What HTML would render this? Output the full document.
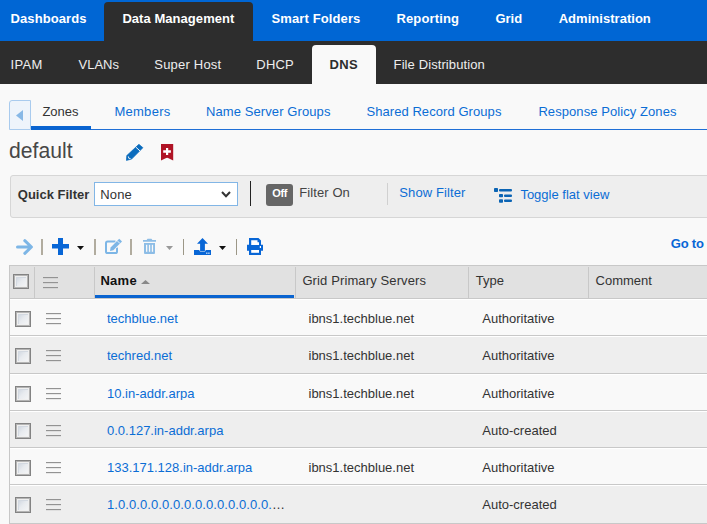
<!DOCTYPE html>
<html><head><meta charset="utf-8">
<style>
html,body{margin:0;padding:0}
body{width:707px;height:524px;overflow:hidden;position:relative;background:#f9f9f9;font-family:"Liberation Sans",sans-serif;font-size:13px;color:#333}
.a{position:absolute}
.t{position:absolute;line-height:1;white-space:nowrap}
.b{font-weight:bold}
.nav{color:#fff;font-weight:bold;top:12px}
.sub{color:#eee;top:58px}
.stab{color:#0b6dd5;top:105px}
.lnk{color:#0b6dd5}
.sep{position:absolute;width:2px;background:#b1ac9f;top:239px;height:16px}
.sep1{width:1px;background:#9c9787}
.cb{position:absolute;width:16px;height:16px;box-sizing:border-box;border:1px solid #838383;box-shadow:inset 0 0 0 1px #b4b4b4,inset 0 0 0 2px #efefef,inset 1px 1px 0 2px #d3d9e1;background:linear-gradient(135deg,#c3ccd8 0%,#e8ebef 50%,#f8f8f8 100%)}
.hb{position:absolute;width:15px;height:11px}
.hb i{position:absolute;left:0;width:15px;height:1px;background:#939393;box-shadow:0 0.5px 0 rgba(150,150,150,.35)}
.row{position:absolute;left:9px;width:698px;border-bottom:1px solid #c6c6c6;box-sizing:border-box}
</style></head><body>
<!-- top nav -->
<div class="a" style="left:0;top:0;width:707px;height:41px;background:#0066d4"></div>
<div class="a" style="left:104px;top:2px;width:149px;height:39px;background:#2d2d2d;border-radius:4px 4px 0 0"></div>
<div class="t nav" style="left:10.5px;letter-spacing:0.1px">Dashboards</div>
<div class="t nav" style="left:122.4px;letter-spacing:0.05px">Data Management</div>
<div class="t nav" style="left:271.5px;letter-spacing:0.12px">Smart Folders</div>
<div class="t nav" style="left:396.4px;letter-spacing:0.15px">Reporting</div>
<div class="t nav" style="left:495.4px">Grid</div>
<div class="t nav" style="left:558.7px;letter-spacing:0.03px">Administration</div>
<!-- sub nav -->
<div class="a" style="left:0;top:41px;width:707px;height:43px;background:#2d2d2d"></div>
<div class="a" style="left:312px;top:45px;width:64px;height:39px;background:#f9f9f9;border-radius:4px 4px 0 0"></div>
<div class="t sub" style="left:10.4px;letter-spacing:0.4px">IPAM</div>
<div class="t sub" style="left:78.5px">VLANs</div>
<div class="t sub" style="left:154.3px;letter-spacing:0.2px">Super Host</div>
<div class="t sub" style="left:256.3px;letter-spacing:0.2px">DHCP</div>
<div class="t sub b" style="left:329.5px;color:#2d2d2d;letter-spacing:0.3px">DNS</div>
<div class="t sub" style="left:393.6px;letter-spacing:0.1px">File Distribution</div>
<!-- subtabs -->
<div class="a" style="left:9px;top:100px;width:20px;height:28px;border:1px solid #a9cbee;background:#eef4fb;border-radius:3px 0 0 0"></div>
<svg class="a" style="left:16px;top:110px" width="7" height="11"><path d="M7 0 L0 5.5 L7 11 Z" fill="#87b8e6"/></svg>
<div class="a" style="left:31px;top:129px;width:676px;height:1px;background:#1f6fd6"></div>
<div class="a" style="left:31px;top:126px;width:60px;height:4px;background:#0a64d0"></div>
<div class="t stab" style="left:42.4px;color:#333">Zones</div>
<div class="t stab" style="left:114.4px;letter-spacing:0.28px">Members</div>
<div class="t stab" style="left:205.9px;letter-spacing:0.1px">Name Server Groups</div>
<div class="t stab" style="left:366.4px;letter-spacing:0.07px">Shared Record Groups</div>
<div class="t stab" style="left:538.4px;letter-spacing:0.075px">Response Policy Zones</div>
<!-- title -->
<div class="t" style="left:8.6px;top:140px;font-size:22px;color:#474747;transform:scaleX(0.962);transform-origin:0 0">default</div>
<svg class="a" style="left:126px;top:144px" width="18" height="17" viewBox="0 0 18 17">
  <path d="M12.9 0.3 L16.9 3.7 L5.6 15.1 L0.4 16.4 L0.8 11.6 Z" fill="#0b6cbd" stroke="#0b6cbd" stroke-width="0.7" stroke-linejoin="round"/>
  <path d="M9.8 3.1 L14.1 7.0" stroke="#f9f9f9" stroke-width="1"/>
  <path d="M2.3 12.4 L2.8 14.3 L4.6 14.6" stroke="#f9f9f9" stroke-width="0.9" fill="none"/>
</svg>
<svg class="a" style="left:161px;top:144px" width="13" height="17" viewBox="0 0 13 17">
  <path d="M0 0 H12.2 V16.6 L7 13.9 Q6.1 13.4 5.2 13.9 L0 16.6 Z" fill="#b01426"/>
  <path d="M5 4 H7.2 V6.3 H9.9 V8.7 H7.2 V10.9 H5 V8.7 H2.2 V6.3 H5 Z" fill="#fff"/>
</svg>
<!-- filter bar -->
<div class="a" style="left:10px;top:175px;width:710px;height:43px;box-sizing:border-box;background:#eeeeee;border:1px solid #d6d6d6;border-radius:3px"></div>
<div class="t b" style="left:17.8px;top:188px">Quick Filter</div>
<div class="a" style="left:94px;top:182px;width:144px;height:24px;box-sizing:border-box;background:#fff;border:1px solid #82b6e6"></div>
<div class="t" style="left:100.3px;top:188px;letter-spacing:0.15px">None</div>
<svg class="a" style="left:221px;top:191px" width="10" height="7" viewBox="0 0 10 7"><path d="M1 1 L5 5.3 L9 1" stroke="#333" stroke-width="2" fill="none"/></svg>
<div class="a" style="left:249.5px;top:181px;width:1.5px;height:25px;background:#222"></div>
<div class="a" style="left:266px;top:184px;width:27px;height:22px;background:#666;border-radius:3px"></div>
<div class="t b" style="left:272.2px;top:188px;font-size:11px;color:#fff;letter-spacing:-0.3px">Off</div>
<div class="t" style="left:299.2px;top:186px;color:#444;letter-spacing:0.1px">Filter On</div>
<div class="a" style="left:387px;top:183px;width:1px;height:22px;background:#d0d0d0"></div>
<div class="t lnk" style="left:399.3px;top:186px;letter-spacing:0.1px">Show Filter</div>
<svg class="a" style="left:494px;top:188px" width="18" height="15" viewBox="0 0 18 15">
  <rect x="0" y="0" width="4" height="4" rx="0.8" fill="#0b64b4"/>
  <rect x="5" y="1" width="13" height="2.5" rx="1" fill="#0b64b4"/>
  <rect x="5" y="6" width="4" height="3.2" rx="0.8" fill="#0b64b4"/>
  <rect x="10" y="6.4" width="8" height="2.5" rx="1" fill="#0b64b4"/>
  <rect x="5" y="11.2" width="4" height="3.5" rx="0.8" fill="#0b64b4"/>
  <rect x="10" y="11.6" width="8" height="2.5" rx="1" fill="#0b64b4"/>
</svg>
<div class="t lnk" style="left:520.4px;top:188px">Toggle flat view</div>
<!-- toolbar -->
<svg class="a" style="left:16px;top:239px" width="17" height="16" viewBox="0 0 17 16">
  <path d="M1.5 8 H15 M8.8 1.7 L15.4 8 L8.8 14.3" stroke="#7db6e6" stroke-width="3" fill="none" stroke-linecap="round" stroke-linejoin="round"/>
</svg>
<div class="sep" style="left:41px"></div>
<svg class="a" style="left:52px;top:238px" width="17" height="17" viewBox="0 0 17 17">
  <path d="M6 0 H11 V6 H17 V10.5 H11 V17 H6 V10.5 H0 V6 H6 Z" fill="#0866d6"/>
</svg>
<svg class="a" style="left:77px;top:246px" width="7" height="4" viewBox="0 0 7 4"><path d="M0 0 H7 L3.5 4 Z" fill="#111"/></svg>
<div class="sep" style="left:94px"></div>
<svg class="a" style="left:105px;top:238px" width="18" height="17" viewBox="0 0 18 17">
  <path d="M10.5 3.6 H2.6 Q1 3.6 1 5.2 V13.4 Q1 15 2.6 15 H10.4 Q12 15 12 13.4 V9.5" stroke="#7db6e6" stroke-width="2" fill="none"/>
  <path d="M14.2 0.8 L17 3.6 L8.3 12.3 L5.0 12.9 L5.6 9.4 Z" fill="#7db6e6" stroke="#f9f9f9" stroke-width="1.2" stroke-linejoin="round" paint-order="stroke"/>
  <path d="M12.3 2.8 L15 5.5" stroke="#f9f9f9" stroke-width="0.9"/>
</svg>
<div class="sep" style="left:130px"></div>
<svg class="a" style="left:143px;top:238px" width="13" height="17" viewBox="0 0 13 17">
  <path d="M4.5 0.8 H8.5 L9.3 2 H13 V3.8 H0 V2 H3.7 Z" fill="#8dbde6"/>
  <path d="M1 5 H12 V15 Q12 16 11 16 H2 Q1 16 1 15 Z" fill="#8dbde6"/>
  <rect x="3" y="6.8" width="1.3" height="7" fill="#f9f9f9"/>
  <rect x="5.9" y="6.8" width="1.3" height="7" fill="#f9f9f9"/>
  <rect x="8.8" y="6.8" width="1.3" height="7" fill="#f9f9f9"/>
</svg>
<svg class="a" style="left:166px;top:246px" width="7" height="4" viewBox="0 0 7 4"><path d="M0 0 H7 L3.5 4 Z" fill="#999"/></svg>
<div class="sep sep1" style="left:183px"></div>
<svg class="a" style="left:194px;top:238px" width="17" height="17" viewBox="0 0 17 17">
  <path d="M8.5 0 L14 5.8 H10.9 V13 H6.1 V5.8 H3 Z" fill="#0866d6"/>
  <path d="M0 12 H5.2 L6 13.4 H11 L11.8 12 H17 V17 H0 Z" fill="#0866d6"/>
  <rect x="12.2" y="14.6" width="1.2" height="1.2" fill="#fff"/>
  <rect x="14.3" y="14.6" width="1.2" height="1.2" fill="#fff"/>
</svg>
<svg class="a" style="left:219px;top:246px" width="7" height="4" viewBox="0 0 7 4"><path d="M0 0 H7 L3.5 4 Z" fill="#111"/></svg>
<div class="sep sep1" style="left:236px"></div>
<svg class="a" style="left:247px;top:238px" width="16" height="17" viewBox="0 0 16 17">
  <path d="M2 0 H11.5 L14 2.5 V6.8 H16 V12.8 H14 V17 H2 V12.8 H0 V6.8 H2 Z" fill="#0866d6"/>
  <path d="M4.2 2.2 H10.5 V4.2 H12 V7 H4.2 Z" fill="#fff"/>
  <rect x="4.2" y="12" width="7.8" height="2.8" fill="#fff"/>
  <rect x="12.8" y="8" width="1.2" height="2" fill="#fff"/>
</svg>
<div class="t b lnk" style="left:670.8px;top:237px;color:#0866d6;letter-spacing:-0.2px">Go to</div>
<!-- table header -->
<div class="a" style="left:9px;top:265px;width:700px;height:34px;box-sizing:border-box;background:#e1e1e1;border:1px solid #c8c8c8;border-right:none"></div>
<div class="a" style="left:34px;top:267px;width:1px;height:31px;background:#c8c8c8"></div>
<div class="a" style="left:94px;top:267px;width:1px;height:31px;background:#c8c8c8"></div>
<div class="a" style="left:295px;top:267px;width:1px;height:31px;background:#c8c8c8"></div>
<div class="a" style="left:468px;top:267px;width:1px;height:31px;background:#c8c8c8"></div>
<div class="a" style="left:588px;top:267px;width:1px;height:31px;background:#c8c8c8"></div>
<div class="a" style="left:95px;top:295px;width:199px;height:3px;background:#0a64d0"></div>
<div class="cb" style="left:13px;top:274px;width:16px;height:15px"></div>
<div class="hb" style="left:43px;top:277px"><i style="top:0"></i><i style="top:5px"></i><i style="top:10px"></i></div>
<div class="t b" style="left:100.4px;top:274px;color:#111;letter-spacing:0.3px">Name</div>
<svg class="a" style="left:141px;top:280px" width="9" height="4" viewBox="0 0 9 4"><path d="M0 4 H9 L4.5 0 Z" fill="#888"/></svg>
<div class="t" style="left:302.4px;top:274px;letter-spacing:0.12px">Grid Primary Servers</div>
<div class="t" style="left:475.7px;top:274px">Type</div>
<div class="t" style="left:595.6px;top:274px">Comment</div>
<!-- rows -->
<!--ROWS-->
<div class="a" style="left:9px;top:265px;width:1px;height:259px;background:#c8c8c8"></div>
<div class="a" style="left:10px;top:299px;width:697px;height:37px;box-sizing:border-box;background:#f9f9f9;border-top:1px solid #fff;border-bottom:1px solid #c8c8c8"></div>
<div class="cb" style="left:15px;top:311px"></div>
<div class="hb" style="left:46px;top:313px"><i style="top:0"></i><i style="top:5px"></i><i style="top:10px"></i></div>
<div class="t lnk" style="left:107px;top:312px;width:181px;overflow:hidden;text-overflow:ellipsis;color:#333"><span class="lnk">techblue.net</span></div>
<div class="t" style="left:308.5px;top:312px">ibns1.techblue.net</div>
<div class="t" style="left:482.3px;top:312px">Authoritative</div>
<div class="a" style="left:10px;top:336px;width:697px;height:38px;box-sizing:border-box;background:#eeeeee;border-top:1px solid #fff;border-bottom:1px solid #c8c8c8"></div>
<div class="cb" style="left:15px;top:348px"></div>
<div class="hb" style="left:46px;top:350px"><i style="top:0"></i><i style="top:5px"></i><i style="top:10px"></i></div>
<div class="t lnk" style="left:107px;top:349px;width:181px;overflow:hidden;text-overflow:ellipsis;color:#333"><span class="lnk">techred.net</span></div>
<div class="t" style="left:308.5px;top:349px">ibns1.techblue.net</div>
<div class="t" style="left:482.3px;top:349px">Authoritative</div>
<div class="a" style="left:10px;top:374px;width:697px;height:37px;box-sizing:border-box;background:#f9f9f9;border-top:1px solid #fff;border-bottom:1px solid #c8c8c8"></div>
<div class="cb" style="left:15px;top:386px"></div>
<div class="hb" style="left:46px;top:388px"><i style="top:0"></i><i style="top:5px"></i><i style="top:10px"></i></div>
<div class="t lnk" style="left:107px;top:387px;width:181px;overflow:hidden;text-overflow:ellipsis;color:#333"><span class="lnk">10.in-addr.arpa</span></div>
<div class="t" style="left:308.5px;top:387px">ibns1.techblue.net</div>
<div class="t" style="left:482.3px;top:387px">Authoritative</div>
<div class="a" style="left:10px;top:411px;width:697px;height:37px;box-sizing:border-box;background:#eeeeee;border-top:1px solid #fff;border-bottom:1px solid #c8c8c8"></div>
<div class="cb" style="left:15px;top:423px"></div>
<div class="hb" style="left:46px;top:425px"><i style="top:0"></i><i style="top:5px"></i><i style="top:10px"></i></div>
<div class="t lnk" style="left:107px;top:424px;width:181px;overflow:hidden;text-overflow:ellipsis;color:#333"><span class="lnk">0.0.127.in-addr.arpa</span></div>
<div class="t" style="left:482.3px;top:424px">Auto-created</div>
<div class="a" style="left:10px;top:448px;width:697px;height:37px;box-sizing:border-box;background:#f9f9f9;border-top:1px solid #fff;border-bottom:1px solid #c8c8c8"></div>
<div class="cb" style="left:15px;top:460px"></div>
<div class="hb" style="left:46px;top:462px"><i style="top:0"></i><i style="top:5px"></i><i style="top:10px"></i></div>
<div class="t lnk" style="left:107px;top:461px;width:181px;overflow:hidden;text-overflow:ellipsis;color:#333"><span class="lnk">133.171.128.in-addr.arpa</span></div>
<div class="t" style="left:308.5px;top:461px">ibns1.techblue.net</div>
<div class="t" style="left:482.3px;top:461px">Authoritative</div>
<div class="a" style="left:10px;top:485px;width:697px;height:39px;box-sizing:border-box;background:#eeeeee;border-top:1px solid #fff;border-bottom:1px solid #c8c8c8"></div>
<div class="cb" style="left:15px;top:497px"></div>
<div class="hb" style="left:46px;top:499px"><i style="top:0"></i><i style="top:5px"></i><i style="top:10px"></i></div>
<div class="t lnk" style="left:107px;top:498px;width:181px;overflow:hidden;text-overflow:ellipsis;color:#333;letter-spacing:0.08px"><span class="lnk">1.0.0.0.0.0.0.0.0.0.0.0.0.0.0.0.0.0.0.0.0.0.0.0.0.0.0.0.0.0.0.0.ip6.arpa</span></div>
<div class="t" style="left:482.3px;top:498px">Auto-created</div>
<!--/ROWS-->
</body></html>
